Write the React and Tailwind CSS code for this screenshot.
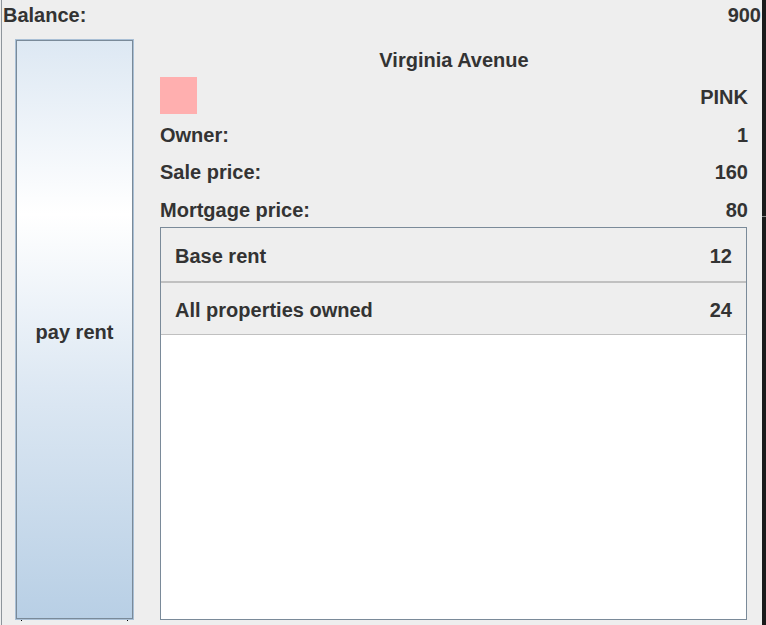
export default function App() {
  return (
    <div className="relative flex w-[766px] h-[625px] overflow-hidden bg-[#eeeeee] font-['Liberation_Sans',Arial,sans-serif] font-bold text-[20px] leading-[23px] text-[#333333]">
      <div className="ml-px w-px h-full bg-[#8e959c]" />
      <div className="flex flex-1 flex-col">
        <div className="flex h-[39px] justify-between pl-px pr-px pt-[4px]">
          <span>Balance:</span>
          <span>900</span>
        </div>
        <div className="flex flex-1">
          <div className="ml-[13px] flex w-[119px] flex-col">
            <div className="h-[581px] border border-[#a9bfd5]">
              <div className="flex h-full items-center justify-center border border-[#7a8a99] bg-[linear-gradient(to_bottom,#dde8f3_0%,#ffffff_30%,#dde8f3_60%,#b8cfe5_100%)] pt-[5px]">
                pay rent
              </div>
            </div>
            <div className="flex justify-between px-[6px]">
              <div className="h-px w-px bg-black" />
              <div className="h-px w-px bg-black" />
            </div>
          </div>
          <div className="ml-[26px] flex w-[588px] flex-col pt-px">
            <div className="flex h-[37px] items-center justify-center pt-[4px]">Virginia Avenue</div>
            <div className="flex h-[37px] items-center justify-between">
              <div className="h-[37px] w-[37px] bg-[#ffafaf]" />
              <span className="pt-[3px]">PINK</span>
            </div>
            <div className="flex h-[38px] items-center justify-between pt-[5px]">
              <span>Owner:</span>
              <span>1</span>
            </div>
            <div className="flex h-[37px] items-center justify-between pt-[4px]">
              <span>Sale price:</span>
              <span>160</span>
            </div>
            <div className="flex h-[38px] items-center justify-between pt-[4px]">
              <span>Mortgage price:</span>
              <span>80</span>
            </div>
            <div className="flex h-[393px] w-[587px] flex-col border border-[#7a8a99] bg-white">
              <div className="flex h-[54px] items-center justify-between border-b border-[#c0c0c0] bg-[#eeeeee] px-[14px] pt-[3px]">
                <span>Base rent</span>
                <span>12</span>
              </div>
              <div className="flex h-[53px] items-center justify-between border-y border-[#c0c0c0] bg-[#eeeeee] px-[14px] pt-[3px]">
                <span>All properties owned</span>
                <span>24</span>
              </div>
            </div>
          </div>
        </div>
      </div>
      <div className="relative h-full w-[4px] bg-[#1b1b1b]">
        <div className="absolute left-0 top-[216px] h-px w-full bg-[#8a8a8a]" />
      </div>
    </div>
  );
}
